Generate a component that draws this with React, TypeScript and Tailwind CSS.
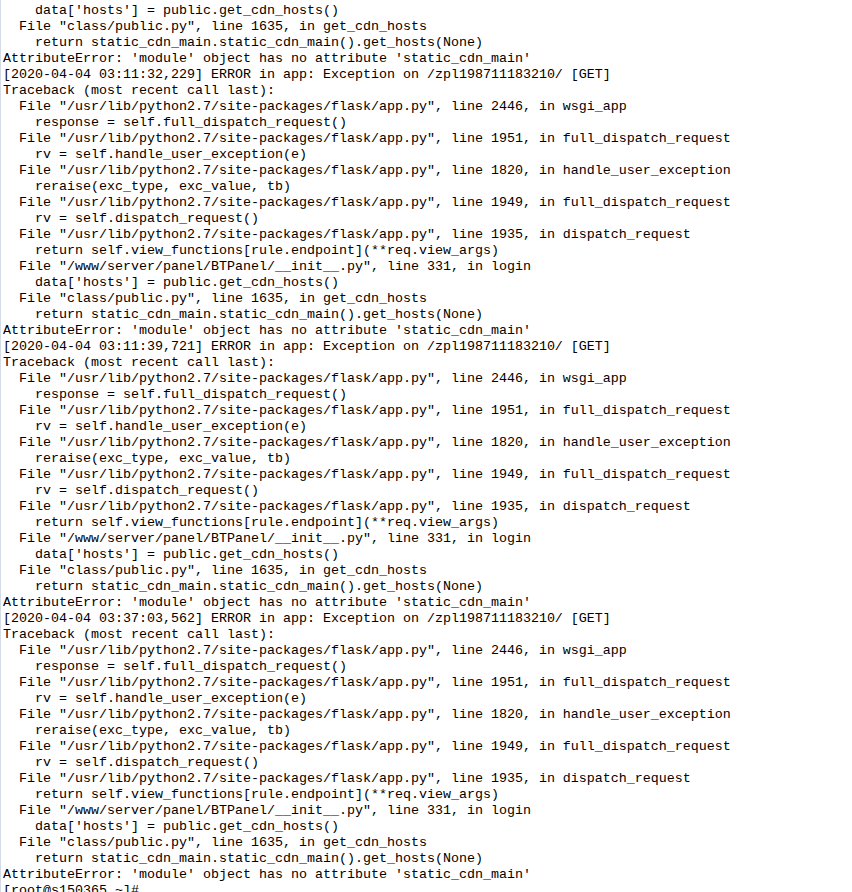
import React from "react";

const block = (ts: string): string[] => [
  `[2020-04-04 ${ts}] ERROR in app: Exception on /zpl198711183210/ [GET]`,
  `Traceback (most recent call last):`,
  `  File "/usr/lib/python2.7/site-packages/flask/app.py", line 2446, in wsgi_app`,
  `    response = self.full_dispatch_request()`,
  `  File "/usr/lib/python2.7/site-packages/flask/app.py", line 1951, in full_dispatch_request`,
  `    rv = self.handle_user_exception(e)`,
  `  File "/usr/lib/python2.7/site-packages/flask/app.py", line 1820, in handle_user_exception`,
  `    reraise(exc_type, exc_value, tb)`,
  `  File "/usr/lib/python2.7/site-packages/flask/app.py", line 1949, in full_dispatch_request`,
  `    rv = self.dispatch_request()`,
  `  File "/usr/lib/python2.7/site-packages/flask/app.py", line 1935, in dispatch_request`,
  `    return self.view_functions[rule.endpoint](**req.view_args)`,
  `  File "/www/server/panel/BTPanel/__init__.py", line 331, in login`,
  `    data['hosts'] = public.get_cdn_hosts()`,
  `  File "class/public.py", line 1635, in get_cdn_hosts`,
  `    return static_cdn_main.static_cdn_main().get_hosts(None)`,
  `AttributeError: 'module' object has no attribute 'static_cdn_main'`,
];

const lines: string[] = [
  `    data['hosts'] = public.get_cdn_hosts()`,
  `  File "class/public.py", line 1635, in get_cdn_hosts`,
  `    return static_cdn_main.static_cdn_main().get_hosts(None)`,
  `AttributeError: 'module' object has no attribute 'static_cdn_main'`,
  ...block("03:11:32,229"),
  ...block("03:11:39,721"),
  ...block("03:37:03,562"),
  `[root@s150365 ~]#`,
];

export default function App() {
  return (
    <div className="w-[852px] h-[892px] overflow-hidden bg-white flex">
      <div className="w-[1px] h-full bg-[#d3dbe6] shrink-0" />
      <div
        className="pl-[2px] pt-[3px] text-black text-[13.333px] leading-[16px]"
        style={{ fontFamily: '"Liberation Mono", "DejaVu Sans Mono", monospace' }}
      >
        {lines.map((l, i) => (
          <div key={i} className="h-[16px] whitespace-pre">
            {l}
          </div>
        ))}
      </div>
    </div>
  );
}
